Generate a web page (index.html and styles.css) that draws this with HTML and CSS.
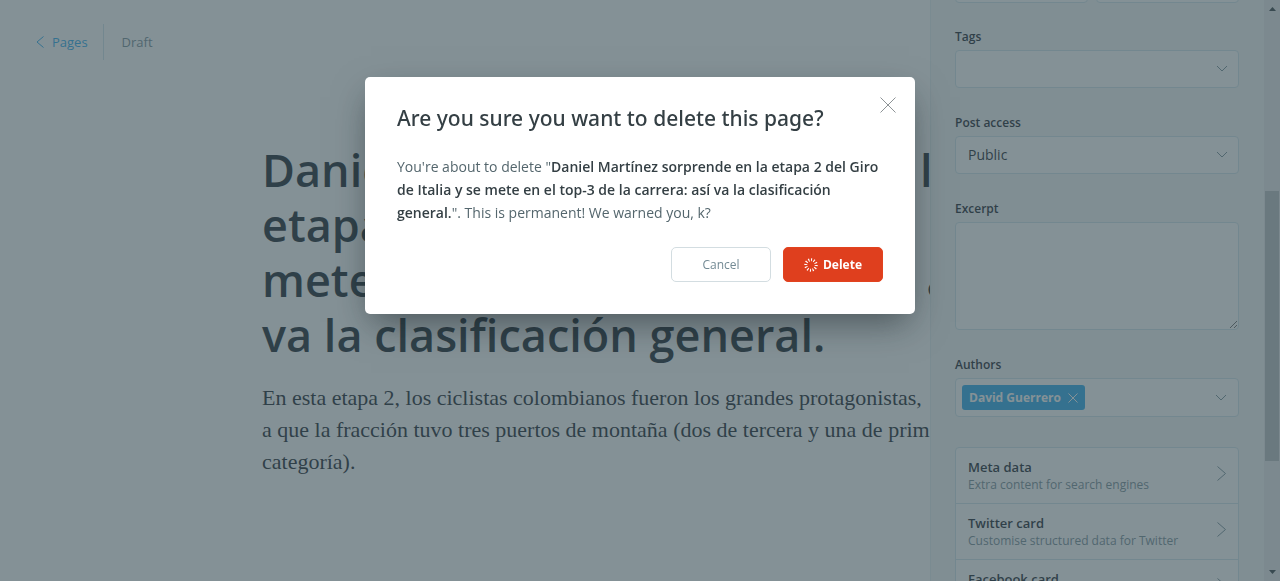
FILE: index.html
```html
<!DOCTYPE html>
<html lang="en">
<head>
<meta charset="utf-8">
<meta name="viewport" content="width=device-width, initial-scale=1">
<title>Edit page</title>
<link rel="stylesheet" href="styles.css">
</head>
<body>
<div class="app">
  <main class="editor">
    <header class="editor-header">
      <a class="back" href="#">
        <svg class="back-icon" viewBox="0 0 8 12" aria-hidden="true"><path d="M7.500 .5 1 6l6.500 5.500"/></svg>
        <span>Pages</span>
      </a>
      <span class="status">Draft</span>
    </header>
    <article class="post">
      <h1 class="post-title">Daniel Martínez sorprende en la<br>etapa 2 del Giro de Italia y se<br>mete en el top-3 de la carrera: así<br>va la clasificación general.</h1>
      <p class="post-body">En esta etapa 2, los ciclistas colombianos fueron los grandes protagonistas,<br>a que la fracción tuvo tres puertos de montaña (dos de tercera y una de primera<br>categoría).</p>
    </article>
  </main>

  <aside class="settings">
    <div class="date-row">
      <input class="control date" type="text" aria-label="Publish date">
      <input class="control time" type="text" aria-label="Publish time">
    </div>
    <div class="field">
      <label for="tags">Tags</label>
      <div class="control-wrap">
        <input class="control" id="tags" type="text">
        <svg class="chevron" viewBox="0 0 12 8" aria-hidden="true"><path d="M1 1l5 5 5-5"/></svg>
      </div>
    </div>
    <div class="field">
      <label for="access">Post access</label>
      <div class="control-wrap">
        <select class="control" id="access"><option>Public</option></select>
        <svg class="chevron" viewBox="0 0 12 8" aria-hidden="true"><path d="M1 1l5 5 5-5"/></svg>
      </div>
    </div>
    <div class="field">
      <label for="excerpt">Excerpt</label>
      <textarea class="control excerpt" id="excerpt"></textarea>
    </div>
    <div class="field">
      <label for="authors">Authors</label>
      <div class="control-wrap control authors">
        <span class="token">David Guerrero
          <button class="token-remove" type="button" aria-label="Remove David Guerrero"><svg viewBox="0 0 10 10" aria-hidden="true"><path d="M.5.5l9 9M9.500.5l-9 9"/></svg></button>
        </span>
        <input class="token-input" id="authors" type="text">
        <svg class="chevron" viewBox="0 0 12 8" aria-hidden="true"><path d="M1 1l5 5 5-5"/></svg>
      </div>
    </div>
    <nav class="panels">
      <button class="panel" type="button">
        <span class="panel-text"><b>Meta data</b><span>Extra content for search engines</span></span>
        <svg class="arrow" viewBox="0 0 9 15" aria-hidden="true"><path d="M.5.5l8 7-8 7"/></svg>
      </button>
      <button class="panel" type="button">
        <span class="panel-text"><b>Twitter card</b><span>Customise structured data for Twitter</span></span>
        <svg class="arrow" viewBox="0 0 9 15" aria-hidden="true"><path d="M.5.5l8 7-8 7"/></svg>
      </button>
      <button class="panel" type="button">
        <span class="panel-text"><b>Facebook card</b><span>Customise Open Graph data</span></span>
        <svg class="arrow" viewBox="0 0 9 15" aria-hidden="true"><path d="M.5.5l8 7-8 7"/></svg>
      </button>
    </nav>
  </aside>

  <div class="scrollbar" aria-hidden="true">
    <svg class="scroll-arrow" viewBox="0 0 7 4"><path d="M0 4h7L3.500 0z"/></svg>
    <div class="track"><div class="thumb"></div></div>
    <svg class="scroll-arrow" viewBox="0 0 7 4"><path d="M0 0h7L3.500 4z"/></svg>
  </div>
</div>

<div class="backdrop">
  <section class="modal" role="dialog" aria-modal="true" aria-labelledby="modal-title">
    <button class="close" type="button" aria-label="Close"><svg viewBox="0 0 16 16" aria-hidden="true"><path d="M.5.5l15 15M15.500.5l-15 15"/></svg></button>
    <h2 class="modal-title" id="modal-title">Are you sure you want to delete this page?</h2>
    <p class="modal-body">You're about to delete "<strong>Daniel Martínez sorprende en la etapa 2 del Giro de Italia y se mete en el top-3 de la carrera: así va la clasificación general.</strong>". This is permanent! We warned you, k?</p>
    <div class="actions">
      <button class="btn" type="button">Cancel</button>
      <button class="btn btn-red" type="button">
        <svg class="spinner" viewBox="0 0 14 14" aria-hidden="true"><circle cx="7" cy="7" r="5.200" pathLength="120"/></svg>
        Delete
      </button>
    </div>
  </section>
</div>
</body>
</html>
```
FILE: styles.css
```css
:root {
  --dark: #15212a;
  --mid: #738a94;
  --blue: #26a7ec;
  --line: #cfe3ea;
  --sans: "Open Sans", "Noto Sans", sans-serif;
}

* { box-sizing: border-box; }

body {
  margin: 0;
  font: 13px/20px var(--sans);
  color: var(--dark);
  background: #fff;
}

button, input, select, textarea { font: inherit; color: inherit; }
button { padding: 0; border: 0; background: none; cursor: pointer; }
svg { display: block; fill: none; stroke: currentColor; }

.app {
  display: flex;
  height: 100vh;
  overflow: hidden;
}

/* Editor */
.editor {
  flex: 1;
  min-width: 0;
  overflow: hidden;
}

.editor-header {
  display: flex;
  align-items: center;
  height: 36px;
  margin: 24px 36px 0;
}

.back {
  display: flex;
  align-items: center;
  gap: 8px;
  height: 36px;
  padding-right: 15px;
  border-right: 1px solid var(--line);
  color: var(--blue);
  text-decoration: none;
}

.back-icon { width: 8px; height: 12px; }

.status {
  padding-left: 18px;
  color: var(--mid);
}

.post {
  padding: 82px 0 0 262px;
  white-space: nowrap;
}

.post-title {
  margin: 0 0 20px;
  font-size: 45px;
  line-height: 55px;
  font-weight: 600;
}

.post-body {
  margin: 0;
  font: 22px/32px "Liberation Serif", serif;
}

/* Settings sidebar */
.settings {
  flex: 0 0 334px;
  padding: 0 25px 0 24px;
  overflow: hidden;
  border-left: 1px solid #e4edf1;
  background: #f4f5f6;
}

.date-row {
  display: flex;
  gap: 8px;
  margin: -35px 0 23px;
}

.date { flex: 11; }
.time { flex: 12; }

.field { margin-bottom: 24px; }

.field label {
  display: block;
  height: 24px;
  font-size: 12px;
  line-height: 21px;
  font-weight: 600;
}

.control {
  display: block;
  width: 100%;
  min-width: 0;
  height: 38px;
  padding: 0 12px;
  border: 1px solid var(--line);
  border-radius: 4px;
  background: #fff;
  appearance: none;
  font-size: 14px;
}

.control-wrap { position: relative; }

.chevron {
  position: absolute;
  top: 15px;
  right: 11px;
  width: 12px;
  height: 8px;
  color: var(--mid);
}

.excerpt { height: 108px; resize: vertical; }

.authors {
  display: flex;
  align-items: center;
  height: 39px;
  padding: 0 6px;
}

.token {
  display: flex;
  align-items: center;
  gap: 7px;
  height: 25px;
  padding: 0 7px;
  border-radius: 3px;
  background: var(--blue);
  color: #fff;
  font-size: 12px;
  font-weight: 700;
  white-space: nowrap;
}

.token-remove svg { width: 10px; height: 10px; }

.token-input {
  flex: 1;
  min-width: 0;
  border: 0;
  background: none;
}

.panels {
  margin-top: 30px;
  border: 1px solid var(--line);
  border-radius: 4px;
  background: #fff;
}

.panel {
  display: flex;
  align-items: center;
  justify-content: space-between;
  width: 100%;
  height: 56px;
  padding: 0 12px;
  border-bottom: 1px solid var(--line);
  text-align: left;
}

.panel-text { display: grid; }
.panel-text b { font-size: 13px; line-height: 18px; font-weight: 600; }
.panel-text span { font-size: 12px; line-height: 18px; color: var(--mid); }
.arrow { width: 9px; height: 15px; margin-bottom: 4px; color: var(--mid); }

/* Page scrollbar */
.scrollbar {
  display: flex;
  flex-direction: column;
  align-items: center;
  gap: 6px;
  flex: 0 0 16px;
  padding: 7px 0;
  background: #e8e9ea;
}

.scroll-arrow { width: 7px; height: 4px; fill: #303c42; stroke: none; }
.track { flex: 1; width: 14px; }
.thumb { height: 270px; margin-top: 174px; background: #b8bcbf; }

/* Modal */
.backdrop {
  position: fixed;
  inset: 0;
  display: flex;
  justify-content: center;
  align-items: flex-start;
  padding: 77px 16px 16px;
  background: rgba(63, 83, 91, .64);
}

.modal {
  position: relative;
  width: 100%;
  max-width: 550px;
  padding: 26px 32px 32px;
  border-radius: 5px;
  background: #fff;
  box-shadow: 0 14px 34px -6px rgba(15, 25, 30, .5);
  color: #343f44;
}

.close {
  position: absolute;
  top: 20px;
  right: 19px;
  color: #8d9396;
}

.close svg { width: 16px; height: 16px; }

.modal-title {
  margin: 0;
  font-family: "Noto Sans", "Open Sans", sans-serif;
  font-size: 21px;
  line-height: 30px;
  font-weight: 500;
}

.modal-body {
  margin: 22px 0 23px;
  font-size: 14px;
  line-height: 23px;
  color: #54666d;
}

.modal-body strong { color: #343f44; font-weight: 600; }

.actions {
  display: flex;
  justify-content: flex-end;
  gap: 12px;
}

.btn {
  display: flex;
  align-items: center;
  justify-content: center;
  gap: 5px;
  width: 100px;
  height: 35px;
  border: 1px solid #d3dde1;
  border-radius: 5px;
  background: #fff;
  color: #738a94;
  font-size: 12px;
}

.btn-red {
  border-color: #e2431f;
  background: #df3f1e;
  color: #fff;
  font-weight: 700;
}

.spinner { width: 14px; height: 14px; }

.spinner circle {
  stroke-width: 3;
  stroke-dasharray: 4 6;
}
```
